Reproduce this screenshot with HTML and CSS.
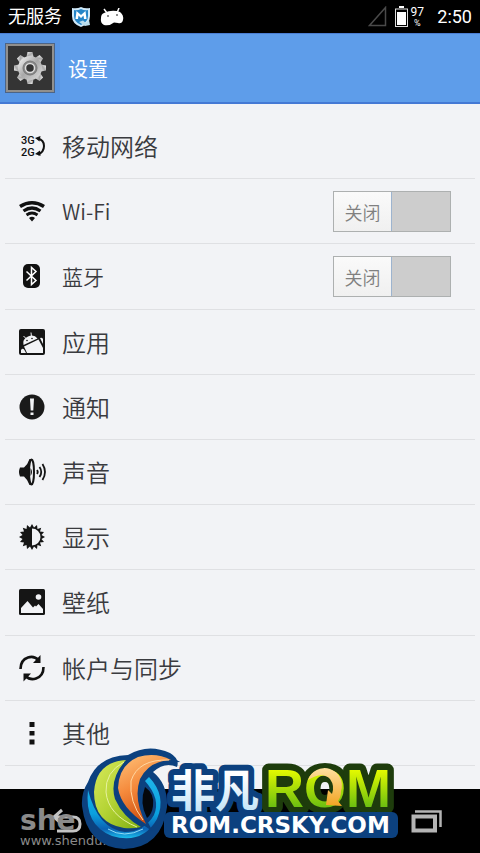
FILE: index.html
```html
<!DOCTYPE html>
<html lang="zh-CN">
<head>
    <meta charset="UTF-8">
    <meta name="viewport" content="width=device-width, initial-scale=1.0">
    <title>设置</title>
    <link rel="stylesheet" href="styles.css">
</head>
<body>

    <!-- Status bar -->
    <div class="status-bar">
        <span class="carrier">无服务</span>
        <svg class="status-shield" viewBox="0 0 20 22">
            <path d="M10 1 Q14 3 19 2 V10 Q19 18 10 21 Q1 18 1 10 V2 Q6 3 10 1Z" fill="#cfe8f8"/>
            <path d="M10 3 Q14 5 17 4 V10 Q17 16 10 19 Q3 16 3 10 V4 Q6 5 10 3Z" fill="#2585c8"/>
            <path d="M4.500 13 L5.500 5 L10 9 L14.500 5 L15.500 13 L13 13 L12.500 9.500 L10 12 L7.500 9.500 L7 13Z" fill="#fff"/>
            <path d="M8 16 L12 14.500 L15 17 L18 14 L19 19 L14 20Z" fill="#b9dcec"/>
        </svg>
        <svg class="status-droid" viewBox="0 0 24 18">
            <path d="M4 1 L7 5 M19 0 L17 5" stroke="#fff" stroke-width="1.500"/>
            <path d="M4 5 Q12 1 20 4 Q24 7 23 12 Q22 16 18 15 L14 14.500 Q10 18 4 17 Q0 15 1 10 Q1 6 4 5Z" fill="#fff"/>
            <circle cx="8" cy="8" r="0.800" fill="#000"/>
            <circle cx="17" cy="7" r="0.800" fill="#000"/>
        </svg>
        <div class="status-right">
            <svg class="status-signal" viewBox="0 0 19 21">
                <path d="M1.500 19.500 H17.500 V1.500Z" fill="none" stroke="#4a4a4a" stroke-width="1.500"/>
            </svg>
            <svg class="status-battery" viewBox="0 0 13 21">
                <path d="M4 0 H9 V2 H4Z M2 6 H11 V19 H2Z" fill="#fff"/>
                <rect x="0.500" y="3" width="12" height="17.500" fill="none" stroke="#ddd"/>
            </svg>
            <span class="percent">97<small>%</small></span>
            <span class="clock">2:50</span>
        </div>
    </div>

    <!-- Title bar -->
    <header class="title-bar">
        <div class="app-icon">
            <svg viewBox="0 0 44 44">
                <defs>
                    <linearGradient id="steel" x1="0" y1="0" x2="1" y2="1">
                        <stop offset="0" stop-color="#fafafa"/>
                        <stop offset="0.5" stop-color="#a9a9a9"/>
                        <stop offset="1" stop-color="#dedede"/>
                    </linearGradient>
                    <path id="tooth" d="M18.500 11 L19.500 6 H24.500 L25.500 11Z"/>
                </defs>
                <g fill="url(#steel)">
                    <use href="#tooth"/>
                    <use href="#tooth" transform="rotate(45 22 22)"/>
                    <use href="#tooth" transform="rotate(90 22 22)"/>
                    <use href="#tooth" transform="rotate(135 22 22)"/>
                    <use href="#tooth" transform="rotate(180 22 22)"/>
                    <use href="#tooth" transform="rotate(225 22 22)"/>
                    <use href="#tooth" transform="rotate(270 22 22)"/>
                    <use href="#tooth" transform="rotate(315 22 22)"/>
                    <circle cx="22" cy="22" r="12"/>
                </g>
                <circle cx="22" cy="22" r="7" fill="#8a8a8a" stroke="#777"/>
                <circle cx="22" cy="22" r="4.500" fill="#333" stroke="#ddd" stroke-width="1.500"/>
            </svg>
        </div>
        <h1>设置</h1>
    </header>

    <!-- Settings list -->
    <main>
        <ul class="settings">
            <li><a class="row" href="#network">
                <svg class="icon" viewBox="0 0 26 26">
                    <text class="icon-text" x="2" y="11">3G</text>
                    <text class="icon-text" x="2" y="23">2G</text>
                    <path d="M19 5.500 Q25 7 25 13 Q25 19 19 21.500" fill="none" stroke="#111" stroke-width="2"/>
                    <path d="M16 5 L21.500 3 L20.500 8.500Z M16 21 L21 17.500 L21.500 23Z" fill="#111"/>
                </svg>
                <span>移动网络</span>
            </a></li>
            <li class="row row-switch">
                <svg class="icon" viewBox="0 0 26 26" fill="none" stroke="#111">
                    <path d="M1 8.500 Q13 1 25 8.500" stroke-width="3.600"/>
                    <path d="M4.500 13 Q13 7 21.500 13" stroke-width="3.200"/>
                    <path d="M7.500 17 Q13 13 18.500 17" stroke-width="2.800"/>
                    <path d="M10 20 Q13 17.500 16 20 L13 23.500Z" fill="#111" stroke="none"/>
                </svg>
                <label for="wifi">Wi-Fi</label>
                <span class="switch">
                    <input type="checkbox" id="wifi">
                    <span class="thumb">关闭</span>
                </span>
            </li>
            <li class="row row-switch">
                <svg class="icon" viewBox="0 0 26 26">
                    <rect x="4" y="1" width="17" height="24" rx="5" fill="#111"/>
                    <path d="M7.500 8.500 L17 17.500 L12.500 21.500 V4.500 L17 8.500 L7.500 17.500" fill="none" stroke="#fff" stroke-width="1.500"/>
                </svg>
                <label for="bluetooth">蓝牙</label>
                <span class="switch">
                    <input type="checkbox" id="bluetooth">
                    <span class="thumb">关闭</span>
                </span>
            </li>
            <li><a class="row" href="#apps">
                <svg class="icon" viewBox="0 0 26 26">
                    <rect width="26" height="26" rx="2" fill="#151515"/>
                    <path d="M4.500 16 Q3 10 9 7.500 Q15 5 18.500 9.500Z" fill="#f2f3f6"/>
                    <path d="M4.500 7 L7 9.500 M12 3.500 L12.500 8" stroke="#f2f3f6"/>
                    <circle cx="8" cy="11.500" r="0.800" fill="#151515"/>
                    <circle cx="13" cy="9.500" r="0.800" fill="#151515"/>
                    <path d="M5 17.500 L19.500 10.500 L24 19 V24 H8Z" fill="#f2f3f6"/>
                    <path d="M21 9 Q23 8 24 10 V15Z M2 21 Q4 18 6 22 L7 24 H2Z" fill="#f2f3f6"/>
                </svg>
                <span>应用</span>
            </a></li>
            <li><a class="row" href="#notifications">
                <svg class="icon" viewBox="0 0 26 26">
                    <circle cx="13" cy="13" r="12.500" fill="#1a1a1a"/>
                    <path d="M11 4.500 H15 L14.300 16.500 H11.700Z M11.500 18.500 H14.500 V21 H11.500Z" fill="#f2f3f6"/>
                </svg>
                <span>通知</span>
            </a></li>
            <li><a class="row" href="#sound">
                <svg class="icon" viewBox="0 0 26 26">
                    <path d="M1 8.500 H5 Q9 5 10.500 0 H13 V26 H10.500 Q9 21 5 17.500 H1 Q-1 13 1 8.500Z" fill="#151515"/>
                    <ellipse cx="12.500" cy="13" rx="2.500" ry="12.500" fill="#f2f3f6" stroke="#151515" stroke-width="2"/>
                    <path d="M11.500 9 Q14.500 13 11.500 17Z" fill="#151515"/>
                    <path d="M18 11 Q19.500 13 18 15 M20.500 8 Q24 13 20.500 18 M23.500 5 Q28.500 13 23.500 21" fill="none" stroke="#151515" stroke-width="1.800"/>
                </svg>
                <span>声音</span>
            </a></li>
            <li><a class="row" href="#display">
                <svg class="icon" viewBox="0 0 26 26">
                    <path d="M13 0 L15 3.500 L18 1 L18.500 5 L22.200 3.800 L21 7.500 L25 8 L22.500 11 L26 13 L22.500 15 L25 18 L21 18.500 L22.200 22.200 L18.500 21 L18 25 L15 22.500 L13 26 L11 22.500 L8 25 L7.500 21 L3.800 22.200 L5 18.500 L1 18 L3.500 15 L0 13 L3.500 11 L1 8 L5 7.500 L3.800 3.800 L7.500 5 L8 1 L11 3.500Z" fill="#151515"/>
                    <path d="M13 4.500 A8.500 8.500 0 0 1 13 21.500Z" fill="#f2f3f6"/>
                </svg>
                <span>显示</span>
            </a></li>
            <li><a class="row" href="#wallpaper">
                <svg class="icon" viewBox="0 0 26 26">
                    <rect width="26" height="26" rx="1.500" fill="#151515"/>
                    <circle cx="19.500" cy="8" r="2.800" fill="#f2f3f6"/>
                    <path d="M2 24 V19 L8.500 12 L14 18.500 L16 16.500 L17 17.500 L19.500 15 L24 20 V24Z" fill="#f2f3f6"/>
                </svg>
                <span>壁纸</span>
            </a></li>
            <li><a class="row" href="#sync">
                <svg class="icon" viewBox="0 0 26 26">
                    <path d="M1.500 14 Q1.500 5 9 2.500 Q15 0.500 19.500 5" fill="none" stroke="#111" stroke-width="2.600"/>
                    <path d="M24.500 12 Q24.500 21 17 23.500 Q11 25.500 6.500 21" fill="none" stroke="#111" stroke-width="2.600"/>
                    <path d="M21.500 0 V8 H14Z M4.500 26.500 V18.500 H12Z" fill="#111"/>
                </svg>
                <span>帐户与同步</span>
            </a></li>
            <li><a class="row" href="#more">
                <svg class="icon" viewBox="0 0 26 26">
                    <path d="M10.500 2 H15.500 V7 H10.500Z M10.500 11 H15.500 V15.500 H10.500Z M10.500 19.500 H15.500 V24.500 H10.500Z" fill="#111"/>
                </svg>
                <span>其他</span>
            </a></li>
        </ul>
    </main>

    <!-- Navigation bar -->
    <footer class="nav-bar">
        <div class="site-mark">
            <span class="site-name">she</span>
            <span class="site-url">www.shendu.com</span>
        </div>
        <button class="nav-back" aria-label="返回">
            <svg viewBox="0 0 34 26">
                <path d="M12 2 L4 9 L12 16 M5 9 H23 Q30 9 30 16 Q30 23 23 23 H7" fill="none" stroke="#c4c4c4" stroke-width="3"/>
            </svg>
        </button>
        <button class="nav-recent" aria-label="最近任务">
            <svg viewBox="0 0 32 23">
                <path d="M3.500 6.500 H25 V20.500 H3.500Z" fill="none" stroke="#b4b4b4" stroke-width="4"/>
                <path d="M5 1.500 H30.500 V17" fill="none" stroke="#b4b4b4" stroke-width="2.500"/>
            </svg>
        </button>

        <!-- ROM site logo, lies over the list and the bar -->
        <svg class="rom-logo" viewBox="78 743 330 110">
            <defs>
                <linearGradient id="ring" x1="0" y1="0" x2="0" y2="1">
                    <stop offset="0" stop-color="#1fb4ea"/>
                    <stop offset="0.6" stop-color="#0aa0de"/>
                    <stop offset="0.85" stop-color="#0b62b4"/>
                    <stop offset="1" stop-color="#1cc0ee"/>
                </linearGradient>
                <linearGradient id="lime" x1="0" y1="0" x2="1" y2="1">
                    <stop offset="0" stop-color="#d9ea5c"/>
                    <stop offset="0.5" stop-color="#b4d334"/>
                    <stop offset="1" stop-color="#7fae12"/>
                </linearGradient>
                <linearGradient id="orange" x1="0" y1="0" x2="0.4" y2="1">
                    <stop offset="0" stop-color="#ffc47c"/>
                    <stop offset="0.5" stop-color="#f58a3c"/>
                    <stop offset="1" stop-color="#cf4e10"/>
                </linearGradient>
                <linearGradient id="ice" x1="0" y1="0" x2="0" y2="1">
                    <stop offset="0.3" stop-color="#ffffff"/>
                    <stop offset="1" stop-color="#b5def6"/>
                </linearGradient>
                <linearGradient id="leaf" x1="0" y1="0" x2="0" y2="1">
                    <stop offset="0.2" stop-color="#e4fa00"/>
                    <stop offset="0.8" stop-color="#6fc010"/>
                </linearGradient>
                <linearGradient id="gold" x1="0" y1="0" x2="0" y2="1">
                    <stop offset="0" stop-color="#ffe0a0"/>
                    <stop offset="1" stop-color="#f2a422"/>
                </linearGradient>
            </defs>

            <path d="M128 755 Q148 743 170 753 Q180 759 177 767 Q165 761 153 772 Q168 784 167 807 Q162 848 124 849 Q87 847 82 806 Q81 793 88 782 Q97 756 128 755Z" fill="#0c417f"/>
            <path d="M145 787 Q155 794 153 806 Q152 814 147 818 Q139 803 145 787Z" fill="#05070b"/>
            <path d="M88 790 Q84 825 112 836 Q142 845 157 819 Q167 796 149 777 L145 781 Q161 799 154 815 Q144 832 125 832 Q98 829 88 790Z" fill="url(#ring)"/>
            <path d="M126 760 Q96 762 94 792 Q94 823 124 828 Q133 829 141 827 Q123 817 115 799 Q109 779 126 760Z" fill="url(#lime)"/>
            <path d="M124 762 Q105 772 106 792 Q108 815 137 827" fill="none" stroke="#e7f2a0"/>
            <path class="crest" d="M171 760 Q156 752 138 757 Q119 765 118 788 Q121 808 146 824 Q133 799 140 779 Q149 761 171 760Z" fill="url(#orange)"/>
            <path d="M169 760 Q138 759 131 781 Q129 802 143 820" fill="none" stroke="#ffd7a2"/>
            <path d="M108 829 Q124 839 143 829" fill="none" stroke="#8fdcf6"/>

            <text class="logo-cn" x="171" y="807">非凡</text>
            <text class="logo-rom" x="265" y="807">ROM</text>
            <path d="M308 780 A17 17 0 0 1 341 791 Q341 797 338 801 L342 806 L326 805 L328 790 L332 794 Q335 786 330 779 Q322 771 308 780Z" fill="url(#gold)"/>
            <rect x="164" y="812" width="234" height="26" rx="6" fill="#0c417f"/>
            <text class="logo-url" x="171" y="833">ROM.CRSKY.COM</text>
        </svg>
    </footer>

</body>
</html>
```

FILE: styles.css
```css
* {
    box-sizing: border-box;
}
body {
    margin: 0;
    min-height: 100vh;
    display: flex;
    flex-direction: column;
    font-family: Roboto, "Noto Sans CJK SC", sans-serif;
    background: #f2f3f6;
    color: #3a3b3f;
}

/* Status bar */
.status-bar {
    display: flex;
    align-items: center;
    height: 33px;
    padding: 0 8px;
    gap: 9px;
    background: #000;
    color: #fff;
    font-size: 18px;
    line-height: 33px;
}
.status-shield {
    width: 20px;
    height: 22px;
}
.status-droid {
    width: 24px;
    height: 18px;
}
.status-right {
    display: flex;
    align-items: center;
    margin-left: auto;
}
.status-signal {
    width: 19px;
    height: 21px;
    margin-right: 8px;
}
.status-battery {
    width: 13px;
    height: 21px;
    margin-right: 2px;
}
.percent {
    width: 14px;
    margin-right: 13px;
    font-size: 12px;
    line-height: 12px;
    text-align: center;
}
.percent small {
    display: block;
    font-size: 9px;
    line-height: 10px;
}

/* Title bar */
.title-bar {
    display: flex;
    align-items: center;
    height: 71px;
    padding: 0 5px;
    gap: 13px;
    background: linear-gradient(to right, #5796e6 60px, #5e9dea 60px);
    border-top: 1px solid #4a7dd2;
    border-bottom: 2px solid #4479d4;
    color: #fff;
}
.title-bar h1 {
    margin: 0;
    font-size: 20px;
    font-weight: 400;
}
.app-icon {
    width: 50px;
    height: 50px;
    border: 3px solid #918f8c;
    outline: 1px solid #4c6486;
    outline-offset: -1px;
    background: #343434;
}
.app-icon svg {
    display: block;
}

/* Settings list */
main {
    flex: 1;
    display: flex;
    padding: 10px 5px 23px;
}
.settings {
    flex: 1;
    display: grid;
    grid-auto-rows: 1fr;
    margin: 0;
    padding: 0;
    list-style: none;
}
.settings li {
    min-height: 65px;
    border-bottom: 1px solid #dfe0e3;
}
.row {
    display: flex;
    align-items: center;
    height: 100%;
    padding: 0 24px 0 14px;
    gap: 17px;
    color: inherit;
    font-family: "Noto Sans CJK SC", sans-serif;
    font-size: 24px;
    font-weight: 350;
    line-height: 32px;
    text-decoration: none;
}
.row-switch {
    font-size: 21px;
}
.icon {
    width: 26px;
    height: 26px;
    overflow: visible;
}
.icon-text {
    font-family: Roboto, sans-serif;
    font-size: 11px;
    font-weight: 500;
    fill: #111;
}

/* On/off switch */
.switch {
    position: relative;
    width: 118px;
    height: 41px;
    margin-left: auto;
    border: 1px solid #adb0b0;
    background: #cdcdcd;
}
.switch input {
    position: absolute;
    inset: 0;
    width: 100%;
    height: 100%;
    margin: 0;
    opacity: 0;
    cursor: pointer;
}
.thumb {
    display: block;
    width: 58px;
    height: 100%;
    border-right: 1px solid #9db4cf;
    background: linear-gradient(#fafafa, #f0f0f0);
    color: #808080;
    font-size: 18px;
    line-height: 40px;
    text-align: center;
}
.switch input:checked + .thumb {
    margin-left: auto;
}

/* Navigation bar */
.nav-bar {
    position: relative;
    display: flex;
    align-items: center;
    justify-content: space-between;
    height: 64px;
    padding: 0 38px 0 50px;
    background: #000;
}
.nav-bar button {
    padding: 0;
    border: none;
    background: none;
    cursor: pointer;
}
.nav-bar button svg {
    display: block;
}
.nav-back {
    width: 34px;
}
.nav-recent {
    width: 32px;
}
.site-mark {
    position: absolute;
    left: 20px;
    bottom: 5px;
    display: flex;
    flex-direction: column;
    color: #8a8a8a;
    font-family: "DejaVu Sans", sans-serif;
}
.site-name {
    font-size: 28px;
    font-weight: 700;
    line-height: 26px;
}
.site-url {
    font-size: 13px;
    line-height: 14px;
}
.rom-logo {
    position: absolute;
    left: 78px;
    bottom: 0;
    width: 330px;
    height: 110px;
    pointer-events: none;
}
.crest {
    paint-order: stroke;
    stroke: #0c417f;
    stroke-width: 5px;
}
.logo-cn,
.logo-rom {
    paint-order: stroke;
    stroke-linejoin: round;
    font-weight: 700;
}
.logo-cn {
    font-family: "Noto Sans CJK SC", sans-serif;
    font-size: 44px;
    fill: url(#ice);
    stroke: #0c417f;
    stroke-width: 12px;
}
.logo-rom {
    font-family: "Liberation Sans", sans-serif;
    font-size: 54px;
    fill: url(#leaf);
    stroke: #1e3c0c;
    stroke-width: 13px;
}
.logo-url {
    font-family: "DejaVu Sans", sans-serif;
    font-size: 23px;
    font-weight: 700;
    fill: #fff;
}
```
